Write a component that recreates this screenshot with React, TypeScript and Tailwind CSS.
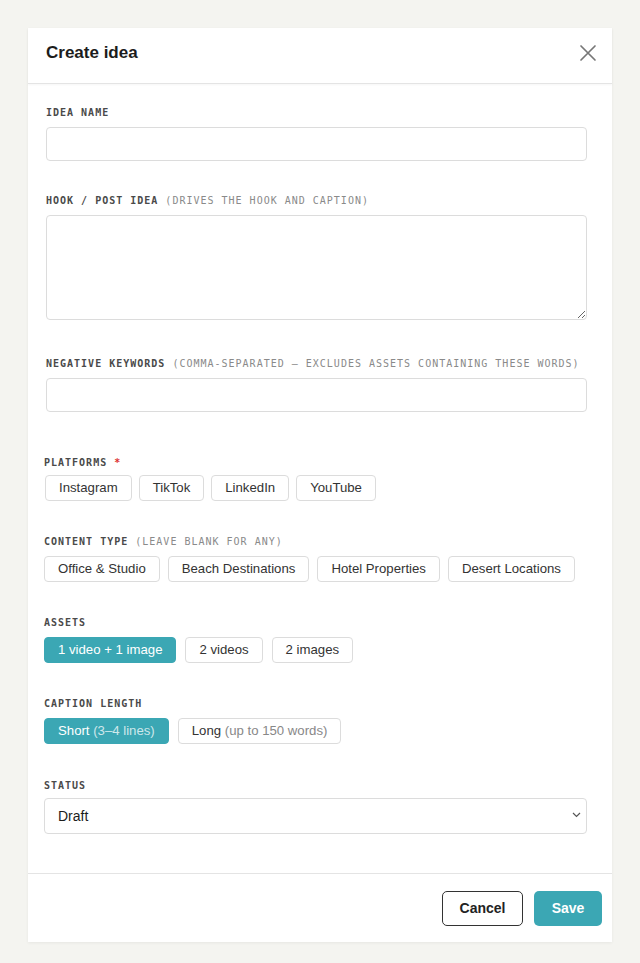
import { useState, ReactNode } from "react";

const sans = "font-['Liberation_Sans','Helvetica',Arial,sans-serif]";
const mono = "font-['DejaVu_Sans_Mono','Liberation_Mono',monospace]";

const Label = ({ title, hint, required, tight }: { title: string; hint?: string; required?: boolean; tight?: boolean }) => (
    <div className={`${mono} text-[10px] leading-[12px] tracking-[1px] ${tight ? 'mb-[6px]' : 'mb-2'} whitespace-nowrap`}>
        <span className="font-bold text-[#4a4a4a]">{title}</span>
        {hint && <span className="text-[#8a8a8a]"> {hint}</span>}
        {required && <span className="text-[#d33] font-bold"> *</span>}
    </div>
);

const Chip = ({ active, onClick, children }: { active?: boolean; onClick?: () => void; children: ReactNode }) => (
    <button
        type="button"
        onClick={onClick}
        className={`h-[26px] px-[13px] rounded-[4px] border text-[13.2px] leading-none ${active ? 'bg-[#3ba7b4] border-[#3ba7b4] text-white' : 'bg-white border-[#dcdcdc] text-[#333]'}`}
    >
        {children}
    </button>
);

export default function App() {
    const [platforms, setPlatforms] = useState<string[]>([]);
    const [types, setTypes] = useState<string[]>([]);
    const [assets, setAssets] = useState('1 video + 1 image');
    const [caption, setCaption] = useState('short');

    const toggle = (list: string[], set: (v: string[]) => void, v: string) =>
        set(list.includes(v) ? list.filter(x => x !== v) : [...list, v]);

    return <div className={`min-h-[963px] bg-[#f4f4f0] pt-[28px] px-[28px] pb-[21px] ${sans}`}>
        <div className="bg-white shadow-[0_1px_3px_rgba(0,0,0,0.06)]">
            {/* header */}
            <div className="h-[56px] flex items-center justify-between pl-[18px] pr-[13px] pb-[5px] border-b border-[#e4e4e4] shadow-[0_1px_2px_rgba(0,0,0,0.04)]">
                <h2 className="text-[17px] font-bold text-[#1c1c1c]">Create idea</h2>
                <button type="button" className="text-[#777] p-[1px] mr-[1px]">
                    <svg width="18" height="18" viewBox="0 0 18 18" fill="none" stroke="currentColor" strokeWidth="1.7" strokeLinecap="round">
                        <path d="M2 2L16 16M16 2L2 16" />
                    </svg>
                </button>
            </div>

            {/* body */}
            <div className="pt-[23px] pb-[39px] pl-[16px] pr-[25px]">
                <div className="pl-[2px]">
                    <Label title="IDEA NAME" />
                    <input type="text" className="block w-full h-[34px] rounded-[4px] border border-[#dcdcdc] px-3 text-[14px] outline-none" />

                    <div className="mt-[34px]">
                        <Label title="HOOK / POST IDEA" hint="(DRIVES THE HOOK AND CAPTION)" />
                        <textarea className="block w-full h-[105px] rounded-[4px] border border-[#dcdcdc] px-3 py-2 text-[14px] outline-none" />
                    </div>

                    <div className="mt-[38px]">
                        <Label title="NEGATIVE KEYWORDS" hint="(COMMA-SEPARATED — EXCLUDES ASSETS CONTAINING THESE WORDS)" />
                        <input type="text" className="block w-full h-[34px] rounded-[4px] border border-[#dcdcdc] px-3 text-[14px] outline-none" />
                    </div>
                </div>

                <div className="mt-[45px]">
                    <Label title="PLATFORMS" required tight />
                    <div className="flex gap-[7px] pl-[1px]">
                        {['Instagram', 'TikTok', 'LinkedIn', 'YouTube'].map(p =>
                            <Chip key={p} active={platforms.includes(p)} onClick={() => toggle(platforms, setPlatforms, p)}>{p}</Chip>)}
                    </div>
                </div>

                <div className="mt-[35px]">
                    <Label title="CONTENT TYPE" hint="(LEAVE BLANK FOR ANY)" />
                    <div className="flex gap-[8px]">
                        {['Office & Studio', 'Beach Destinations', 'Hotel Properties', 'Desert Locations'].map(t =>
                            <Chip key={t} active={types.includes(t)} onClick={() => toggle(types, setTypes, t)}>{t}</Chip>)}
                    </div>
                </div>

                <div className="mt-[35px]">
                    <Label title="ASSETS" />
                    <div className="flex gap-[9px]">
                        {['1 video + 1 image', '2 videos', '2 images'].map(a =>
                            <Chip key={a} active={assets === a} onClick={() => setAssets(a)}>{a}</Chip>)}
                    </div>
                </div>

                <div className="mt-[35px]">
                    <Label title="CAPTION LENGTH" />
                    <div className="flex gap-[9px]">
                        <Chip active={caption === 'short'} onClick={() => setCaption('short')}>
                            Short <span className={caption === 'short' ? 'text-white/75' : 'text-[#888]'}>(3–4 lines)</span>
                        </Chip>
                        <Chip active={caption === 'long'} onClick={() => setCaption('long')}>
                            Long <span className={caption === 'long' ? 'text-white/75' : 'text-[#888]'}>(up to 150 words)</span>
                        </Chip>
                    </div>
                </div>

                <div className="mt-[36px]">
                    <Label title="STATUS" tight />
                    <div className="relative">
                        <select className="block w-full h-[36px] appearance-none rounded-[4px] border border-[#dcdcdc] bg-white pl-[13px] text-[14px] text-[#1c1c1c] outline-none">
                            <option>Draft</option>
                            <option>Ready</option>
                            <option>Published</option>
                        </select>
                        <svg className="absolute right-[6px] top-[14px] pointer-events-none" width="9" height="6" viewBox="0 0 9 6" fill="none" stroke="#555" strokeWidth="1.2">
                            <path d="M1 1L4.5 4.5L8 1" />
                        </svg>
                    </div>
                </div>
            </div>

            {/* footer */}
            <div className="h-[69px] border-t border-[#e4e4e4] flex items-center justify-end gap-[11px] pr-[10px]">
                <button type="button" className="h-[35px] w-[81px] rounded-[5px] border border-[#333] bg-white text-[14px] font-bold text-[#222]">Cancel</button>
                <button type="button" className="h-[35px] w-[68px] rounded-[5px] bg-[#3ba7b4] text-[14px] font-bold text-white">Save</button>
            </div>
        </div>
    </div>
}
